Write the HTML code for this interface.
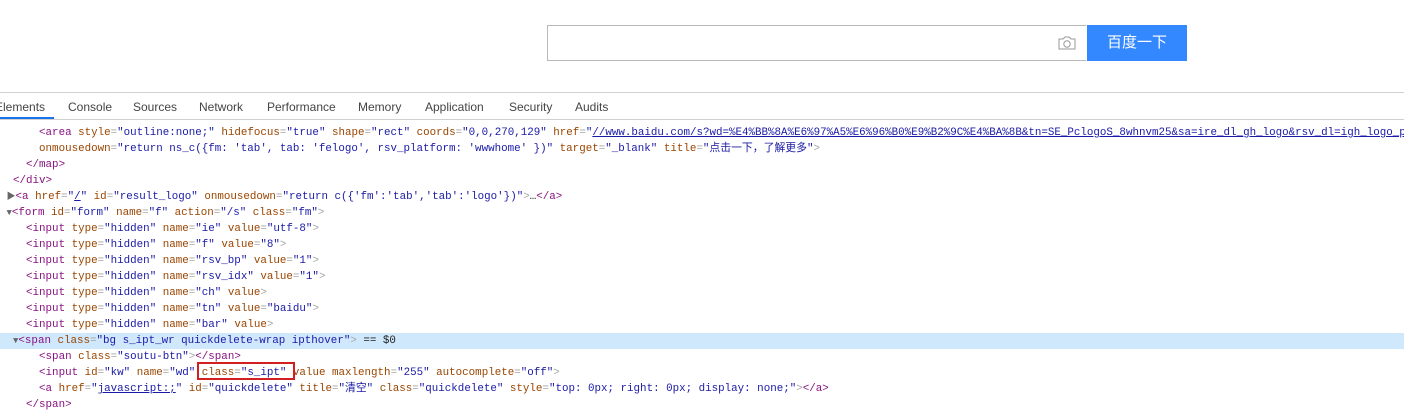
<!DOCTYPE html>
<html><head><meta charset="utf-8"><style>
html,body{margin:0;padding:0;width:1404px;height:411px;overflow:hidden;background:#fff;position:relative}
.sb{position:absolute;left:547px;top:25px;width:538px;height:34px;border:1px solid #b8b8b8;border-right:none}
.btn{position:absolute;left:1087px;top:25px;width:100px;height:36px;background:#3388ff;color:#fff;font:15px "Liberation Sans","Noto Sans CJK SC",sans-serif;text-align:center;line-height:36px}
.cam{position:absolute;left:1057px;top:34px}
.tabs{position:absolute;left:0;top:92px;width:1404px;height:26px;border-top:1px solid #d0d0d0;border-bottom:1px solid #d0d0d0;background:#fff;font:12px "Liberation Sans",sans-serif;color:#444}
.tabs span{position:absolute;top:7px}
.ul{position:absolute;left:0;top:24px;width:54px;height:2px;background:#1a73e8}
.code{position:absolute;left:0;top:125px;width:1404px;font:10.85px "Liberation Mono","Noto Sans CJK SC",monospace;color:#a5a5a5}
.l{height:16px;line-height:16px;position:relative;white-space:pre;overflow:hidden}
.hl{background:#cfe8fc}
.t{color:#881280}.a{color:#994500}.v{color:#1a1aa6}.k{color:#1a1aa6;text-decoration:underline}.x{color:#222}
.box{position:absolute;left:197px;top:362px;width:94px;height:14px;border:2px solid #d21f1f}
.tri{color:#666;font-size:9px}
</style></head><body>
<div class="sb"></div>
<svg class="cam" width="20" height="18" viewBox="0 0 20 18"><path d="M2 5h4l2-2h4l2 2h4v10H2z" fill="none" stroke="#999" stroke-width="1"/><circle cx="10" cy="10" r="3.2" fill="none" stroke="#999"/></svg>
<div class="btn">百度一下</div>
<div class="tabs">
<span style="left:-5px">Elements</span><span style="left:68px">Console</span><span style="left:133px">Sources</span><span style="left:199px">Network</span><span style="left:267px">Performance</span><span style="left:358px">Memory</span><span style="left:425px">Application</span><span style="left:509px">Security</span><span style="left:575px">Audits</span>
<div class="ul"></div></div>
<div class="code"><div class="l">      <span class="t">&lt;area</span> <span class="a">style</span>=<span class="v">"outline:none;"</span> <span class="a">hidefocus</span>=<span class="v">"true"</span> <span class="a">shape</span>=<span class="v">"rect"</span> <span class="a">coords</span>=<span class="v">"0,0,270,129"</span> <span class="a">href</span>=<span class="v">"</span><span class="k">//www.baidu.com/s?wd=%E4%BB%8A%E6%97%A5%E6%96%B0%E9%B2%9C%E4%BA%8B&amp;tn=SE_PclogoS_8whnvm25&amp;sa=ire_dl_gh_logo&amp;rsv_dl=igh_logo_pc</span></div><div class="l">      <span class="a">onmousedown</span>=<span class="v">"return ns_c({fm: 'tab', tab: 'felogo', rsv_platform: 'wwwhome' })"</span> <span class="a">target</span>=<span class="v">"_blank"</span> <span class="a">title</span>=<span class="v">"点击一下，了解更多"</span>&gt;</div><div class="l">    <span class="t">&lt;/map&gt;</span></div><div class="l">  <span class="t">&lt;/div&gt;</span></div><div class="l"> <span class="tri">▶</span><span class="t">&lt;a</span> <span class="a">href</span>=<span class="v">"</span><span class="k">/</span><span class="v">"</span> <span class="a">id</span>=<span class="v">"result_logo"</span> <span class="a">onmousedown</span>=<span class="v">"return c({'fm':'tab','tab':'logo'})"</span>&gt;<span class="x">…</span><span class="t">&lt;/a&gt;</span></div><div class="l"> <span class="tri">▼</span><span class="t">&lt;form</span> <span class="a">id</span>=<span class="v">"form"</span> <span class="a">name</span>=<span class="v">"f"</span> <span class="a">action</span>=<span class="v">"/s"</span> <span class="a">class</span>=<span class="v">"fm"</span>&gt;</div><div class="l">    <span class="t">&lt;input</span> <span class="a">type</span>=<span class="v">"hidden"</span> <span class="a">name</span>=<span class="v">"ie"</span> <span class="a">value</span>=<span class="v">"utf-8"</span>&gt;</div><div class="l">    <span class="t">&lt;input</span> <span class="a">type</span>=<span class="v">"hidden"</span> <span class="a">name</span>=<span class="v">"f"</span> <span class="a">value</span>=<span class="v">"8"</span>&gt;</div><div class="l">    <span class="t">&lt;input</span> <span class="a">type</span>=<span class="v">"hidden"</span> <span class="a">name</span>=<span class="v">"rsv_bp"</span> <span class="a">value</span>=<span class="v">"1"</span>&gt;</div><div class="l">    <span class="t">&lt;input</span> <span class="a">type</span>=<span class="v">"hidden"</span> <span class="a">name</span>=<span class="v">"rsv_idx"</span> <span class="a">value</span>=<span class="v">"1"</span>&gt;</div><div class="l">    <span class="t">&lt;input</span> <span class="a">type</span>=<span class="v">"hidden"</span> <span class="a">name</span>=<span class="v">"ch"</span> <span class="a">value</span>&gt;</div><div class="l">    <span class="t">&lt;input</span> <span class="a">type</span>=<span class="v">"hidden"</span> <span class="a">name</span>=<span class="v">"tn"</span> <span class="a">value</span>=<span class="v">"baidu"</span>&gt;</div><div class="l">    <span class="t">&lt;input</span> <span class="a">type</span>=<span class="v">"hidden"</span> <span class="a">name</span>=<span class="v">"bar"</span> <span class="a">value</span>&gt;</div><div class="l hl">  <span class="tri">▼</span><span class="t">&lt;span</span> <span class="a">class</span>=<span class="v">"bg s_ipt_wr quickdelete-wrap ipthover"</span>&gt; <span class="x">== $0</span></div><div class="l">      <span class="t">&lt;span</span> <span class="a">class</span>=<span class="v">"soutu-btn"</span>&gt;<span class="t">&lt;/span&gt;</span></div><div class="l">      <span class="t">&lt;input</span> <span class="a">id</span>=<span class="v">"kw"</span> <span class="a">name</span>=<span class="v">"wd"</span> <span class="a">class</span>=<span class="v">"s_ipt"</span> <span class="a">value</span> <span class="a">maxlength</span>=<span class="v">"255"</span> <span class="a">autocomplete</span>=<span class="v">"off"</span>&gt;</div><div class="l">      <span class="t">&lt;a</span> <span class="a">href</span>=<span class="v">"</span><span class="k">javascript:;</span><span class="v">"</span> <span class="a">id</span>=<span class="v">"quickdelete"</span> <span class="a">title</span>=<span class="v">"清空"</span> <span class="a">class</span>=<span class="v">"quickdelete"</span> <span class="a">style</span>=<span class="v">"top: 0px; right: 0px; display: none;"</span>&gt;<span class="t">&lt;/a&gt;</span></div><div class="l">    <span class="t">&lt;/span&gt;</span></div></div>
<div class="box"></div>
</body></html>
